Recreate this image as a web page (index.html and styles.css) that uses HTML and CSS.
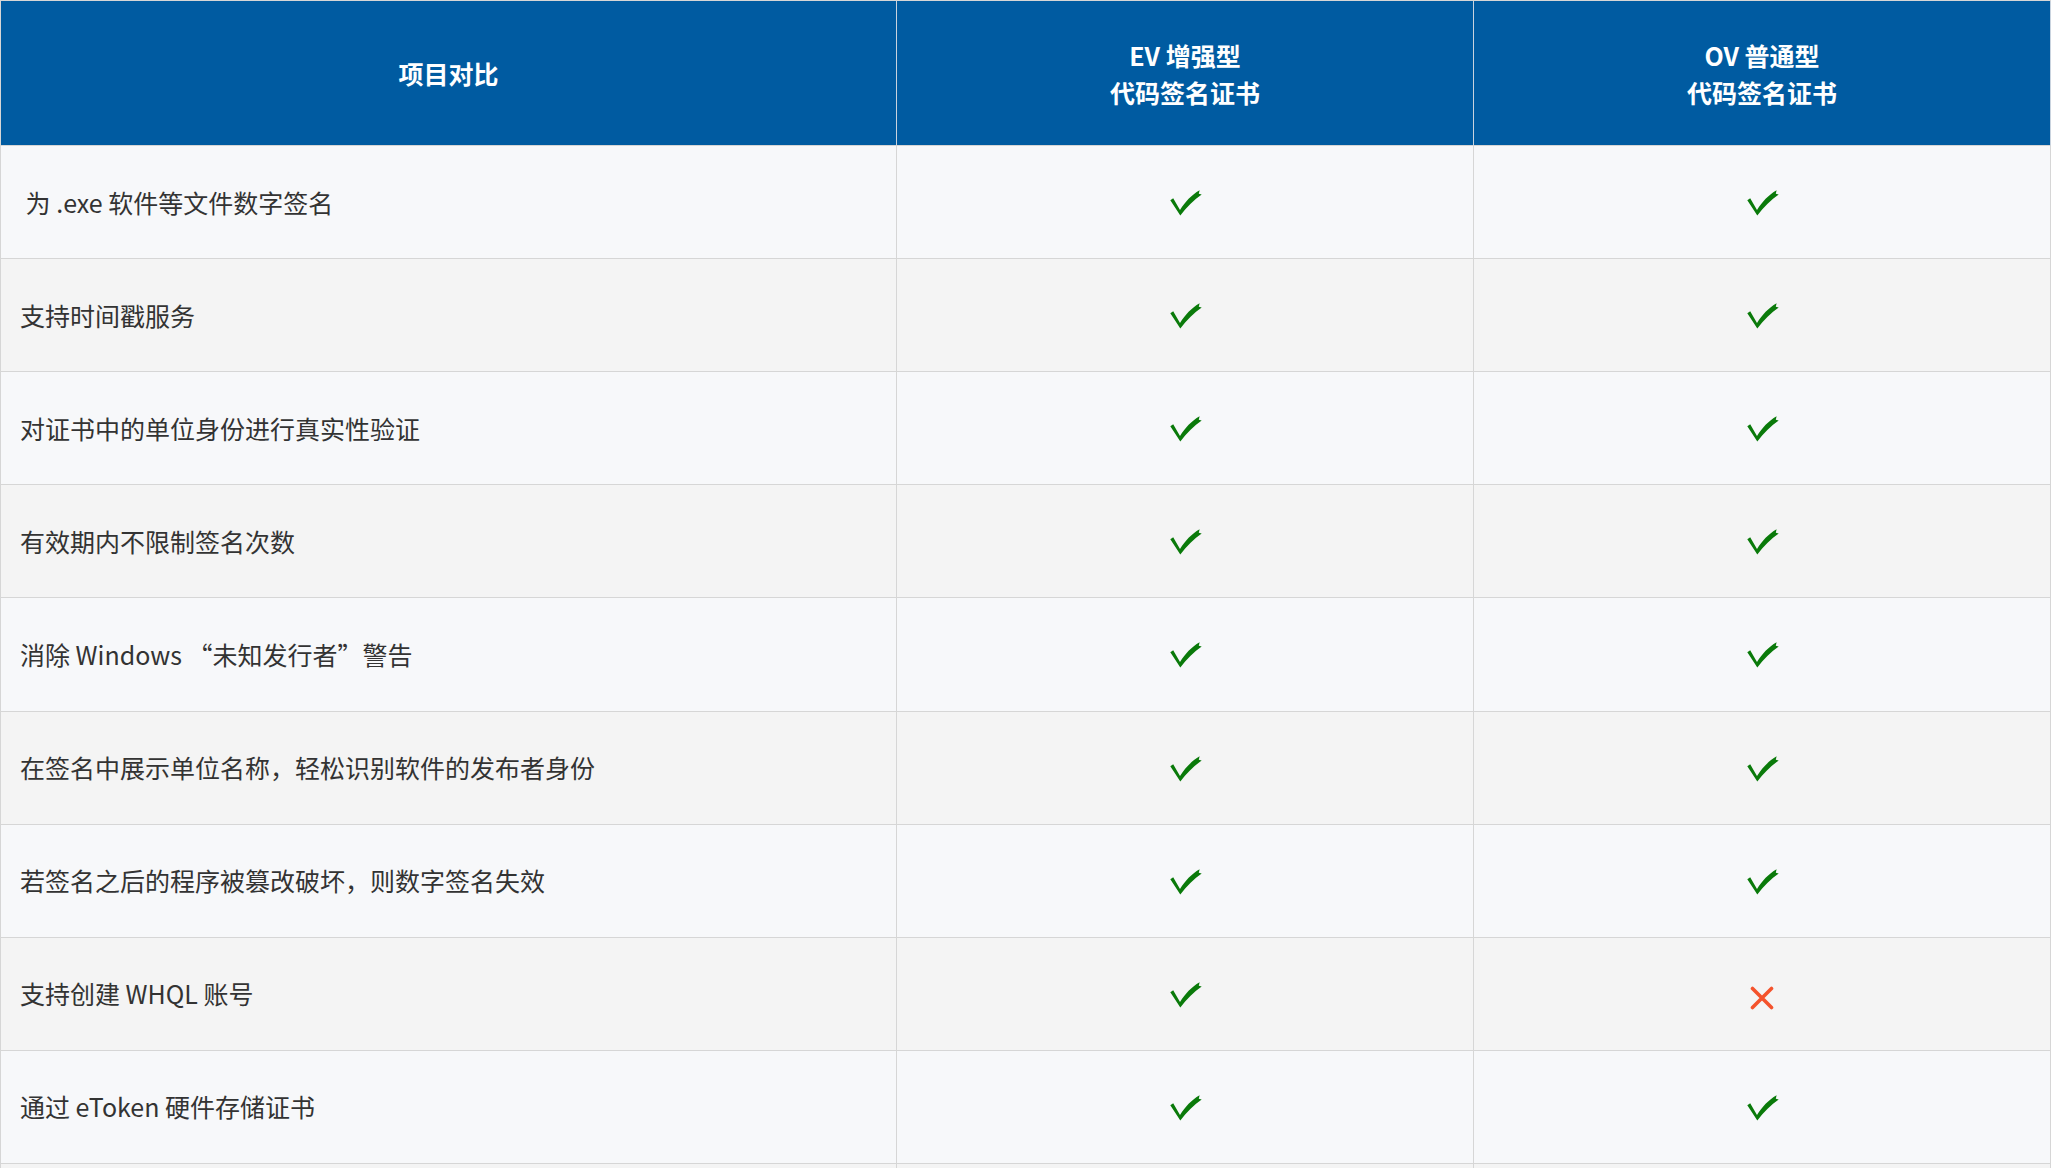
FILE: index.html
```html
<!DOCTYPE html>
<html lang="zh-CN">
<head>
<meta charset="utf-8">
<title>代码签名证书对比</title>
<link rel="stylesheet" href="styles.css">
</head>
<body>
<svg class="defs" width="0" height="0" aria-hidden="true">
  <defs>
    <symbol id="ok" viewBox="0 0 32 26">
      <path d="M0.3 10.2 L3.2 8.2 L10 20 C15 12 21.5 5 29.6 0.3 L28.8 3.8 L31.7 4.6 C24 9.8 17 16.8 10.3 25.6 Z" fill="#0a7a0a"/>
    </symbol>
    <symbol id="no" viewBox="0 0 24 24">
      <path d="M2.5 2.5 L21.5 21.5 M21.5 2.5 L2.5 21.5" stroke="#f4532c" stroke-width="3.6" stroke-linecap="round" fill="none"/>
    </symbol>
  </defs>
</svg>
<div class="table">
  <div class="row head">
    <div class="cell name">项目对比</div>
    <div class="cell">EV 增强型<br>代码签名证书</div>
    <div class="cell">OV 普通型<br>代码签名证书</div>
  </div>
  <div class="row odd">
    <div class="cell name">&nbsp;为 .exe 软件等文件数字签名</div>
    <div class="cell mark"><svg class="ok"><use href="#ok"/></svg></div>
    <div class="cell mark"><svg class="ok"><use href="#ok"/></svg></div>
  </div>
  <div class="row even">
    <div class="cell name">支持时间戳服务</div>
    <div class="cell mark"><svg class="ok"><use href="#ok"/></svg></div>
    <div class="cell mark"><svg class="ok"><use href="#ok"/></svg></div>
  </div>
  <div class="row odd">
    <div class="cell name">对证书中的单位身份进行真实性验证</div>
    <div class="cell mark"><svg class="ok"><use href="#ok"/></svg></div>
    <div class="cell mark"><svg class="ok"><use href="#ok"/></svg></div>
  </div>
  <div class="row even">
    <div class="cell name">有效期内不限制签名次数</div>
    <div class="cell mark"><svg class="ok"><use href="#ok"/></svg></div>
    <div class="cell mark"><svg class="ok"><use href="#ok"/></svg></div>
  </div>
  <div class="row odd">
    <div class="cell name">消除 Windows “未知发行者”警告</div>
    <div class="cell mark"><svg class="ok"><use href="#ok"/></svg></div>
    <div class="cell mark"><svg class="ok"><use href="#ok"/></svg></div>
  </div>
  <div class="row even">
    <div class="cell name">在签名中展示单位名称，轻松识别软件的发布者身份</div>
    <div class="cell mark"><svg class="ok"><use href="#ok"/></svg></div>
    <div class="cell mark"><svg class="ok"><use href="#ok"/></svg></div>
  </div>
  <div class="row odd">
    <div class="cell name">若签名之后的程序被篡改破坏，则数字签名失效</div>
    <div class="cell mark"><svg class="ok"><use href="#ok"/></svg></div>
    <div class="cell mark"><svg class="ok"><use href="#ok"/></svg></div>
  </div>
  <div class="row even">
    <div class="cell name">支持创建 WHQL 账号</div>
    <div class="cell mark"><svg class="ok"><use href="#ok"/></svg></div>
    <div class="cell mark"><svg class="no"><use href="#no"/></svg></div>
  </div>
  <div class="row odd">
    <div class="cell name">通过 eToken 硬件存储证书</div>
    <div class="cell mark"><svg class="ok"><use href="#ok"/></svg></div>
    <div class="cell mark"><svg class="ok"><use href="#ok"/></svg></div>
  </div>
  <div class="row even">
    <div class="cell name"></div>
    <div class="cell mark"></div>
    <div class="cell mark"></div>
  </div>
</div>
</body>
</html>
```
FILE: styles.css
```css
html, body {
  margin: 0;
  padding: 0;
  background: #ffffff;
}
body {
  font-family: "Noto Sans CJK SC", "Noto Sans", sans-serif;
  color: #333333;
  overflow: hidden;
}
.defs {
  position: absolute;
  width: 0;
  height: 0;
}
.table {
  width: 2051px;
  border-top: 1px solid #d6d6d6;
  border-left: 1px solid #d6d6d6;
  box-sizing: border-box;
}
.row {
  display: grid;
  grid-template-columns: 896px 577px 577px;
  height: 113.12px;
}
.head {
  height: 145px;
  background: #005ba1;
  color: #ffffff;
  font-weight: 700;
}
.odd { background: #f7f8fa; }
.even { background: #f4f4f4; }
.cell {
  box-sizing: border-box;
  border-right: 1px solid #d6d6d6;
  border-bottom: 1px solid #d6d6d6;
  display: flex;
  align-items: center;
  justify-content: center;
  text-align: center;
  font-size: 25px;
  line-height: 37px;
}
.row .name {
  justify-content: flex-start;
  padding-left: 19px;
  text-align: left;
}
.head .name {
  justify-content: center;
  padding-left: 0;
  text-align: center;
}
.head .cell {
  border-right-color: #c9d3de;
  padding-top: 1px;
}
.mark svg.ok {
  width: 32px;
  height: 26px;
  margin-left: 1px;
  margin-top: 2px;
}
.mark svg.no {
  width: 24px;
  height: 24px;
  margin-top: 8px;
}
```
